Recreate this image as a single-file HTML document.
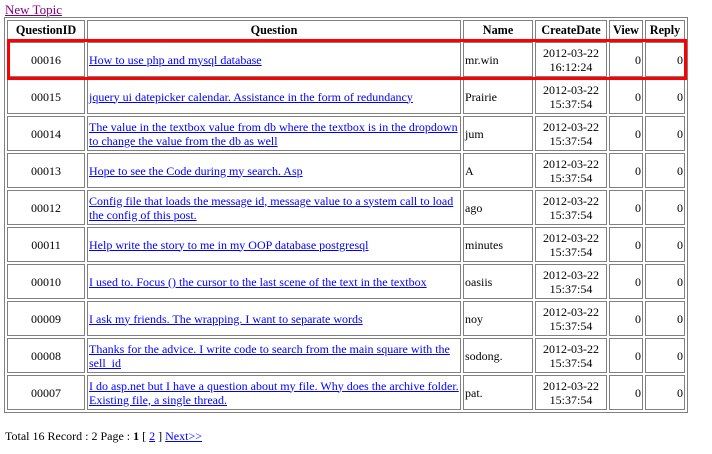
<!DOCTYPE html>
<html><head><style>
body{margin:0;font-family:"Liberation Serif",serif;font-size:12px;background:#fff;color:#000;position:relative;width:712px;height:454px;overflow:hidden}
a{color:#00f}
.nt{position:absolute;left:5px;top:2px;color:#800080;font-size:13px}
table{position:absolute;left:4px;top:17px;border:1px solid #808080;border-spacing:2px;table-layout:fixed;width:684px;font-size:12px}
td,th{border:1px solid #808080;padding:0 1px;line-height:14px;overflow:hidden}
th{height:18px;font-weight:bold;padding:0;font-size:12.2px}
td{height:33px;padding-top:0;padding-bottom:0}
.c{text-align:center}.r{text-align:right}
.red{position:absolute;left:7px;top:39px;width:674px;height:35px;border:3px solid #f00}
.ft{position:absolute;left:5px;top:429px}
</style></head><body>
<a class="nt" href="#">New Topic</a>
<table>
<colgroup><col style="width:78px"><col style="width:374px"><col style="width:70px"><col style="width:72px"><col style="width:34px"><col style="width:40px"></colgroup>
<tr><th>QuestionID</th><th>Question</th><th>Name</th><th>CreateDate</th><th>View</th><th>Reply</th></tr>
<tr><td class="c">00016</td><td><a href="#">How to use php and mysql database</a></td><td>mr.win</td><td class="c">2012-03-22 16:12:24</td><td class="r">0</td><td class="r">0</td></tr>
<tr><td class="c">00015</td><td><a href="#">jquery ui datepicker calendar. Assistance in the form of redundancy</a></td><td>Prairie</td><td class="c">2012-03-22 15:37:54</td><td class="r">0</td><td class="r">0</td></tr>
<tr><td class="c">00014</td><td><a href="#">The value in the textbox value from db where the textbox is in the dropdown to change the value from the db as well</a></td><td>jum</td><td class="c">2012-03-22 15:37:54</td><td class="r">0</td><td class="r">0</td></tr>
<tr><td class="c">00013</td><td><a href="#">Hope to see the Code during my search. Asp</a></td><td>A</td><td class="c">2012-03-22 15:37:54</td><td class="r">0</td><td class="r">0</td></tr>
<tr><td class="c">00012</td><td><a href="#">Config file that loads the message id, message value to a system call to load the config of this post.</a></td><td>ago</td><td class="c">2012-03-22 15:37:54</td><td class="r">0</td><td class="r">0</td></tr>
<tr><td class="c">00011</td><td><a href="#">Help write the story to me in my OOP database postgresql</a></td><td>minutes</td><td class="c">2012-03-22 15:37:54</td><td class="r">0</td><td class="r">0</td></tr>
<tr><td class="c">00010</td><td><a href="#">I used to. Focus () the cursor to the last scene of the text in the textbox</a></td><td>oasiis</td><td class="c">2012-03-22 15:37:54</td><td class="r">0</td><td class="r">0</td></tr>
<tr><td class="c">00009</td><td><a href="#">I ask my friends. The wrapping. I want to separate words</a></td><td>noy</td><td class="c">2012-03-22 15:37:54</td><td class="r">0</td><td class="r">0</td></tr>
<tr><td class="c">00008</td><td><a href="#">Thanks for the advice. I write code to search from the main square with the sell_id</a></td><td>sodong.</td><td class="c">2012-03-22 15:37:54</td><td class="r">0</td><td class="r">0</td></tr>
<tr><td class="c">00007</td><td><a href="#">I do asp.net but I have a question about my file. Why does the archive folder. Existing file, a single thread.</a></td><td>pat.</td><td class="c">2012-03-22 15:37:54</td><td class="r">0</td><td class="r">0</td></tr>
</table>
<div class="red"></div>
<div class="ft">Total 16 Record : 2 Page : <b>1</b> [ <a href="#">2</a> ] <a href="#">Next&gt;&gt;</a></div>
</body></html>
